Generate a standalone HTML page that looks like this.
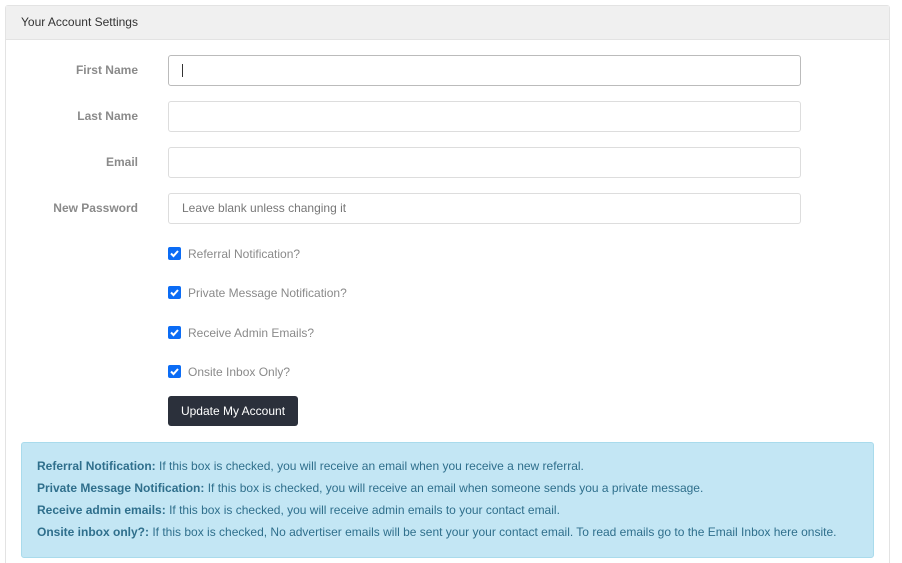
<!DOCTYPE html>
<html><head><style>
html,body{margin:0;background:#fff;font-family:"Liberation Sans",Arial,sans-serif;font-size:12px;width:902px;height:563px;overflow:hidden;position:relative;}
.card{position:absolute;left:5px;top:5px;width:883px;height:562px;border:1px solid #e3e3e3;border-bottom:none;border-radius:3px 3px 0 0;}
.hd{height:33px;background:#f0f0f0;border-bottom:1px solid #e3e3e3;line-height:33px;padding-left:15px;color:#333;font-size:12px;}
.lbl{position:absolute;width:132px;text-align:right;font-weight:bold;color:#8a8a8a;font-size:12px;}
.inp{position:absolute;left:162px;border:1px solid #ddd;border-radius:3px;box-sizing:border-box;width:633px;height:31px;color:#777;padding-left:13px;line-height:29px;}
.cb{position:absolute;left:162px;width:13px;height:13px;background:#0b6cf5;border-radius:2px;}
.cbl{position:absolute;left:182px;color:#8a8a8a;font-size:12px;}
.btn{position:absolute;left:162px;top:390px;width:130px;height:30px;background:#2b303b;border-radius:3px;color:#fff;text-align:center;line-height:30px;font-size:12px;}
.al{position:absolute;left:15px;top:436px;width:851px;height:114px;background:#c3e6f4;border:1px solid #a9dbec;border-radius:3px;color:#2f6f8c;font-size:12px;}
.al p{margin:0;position:absolute;left:15px;}
</style></head><body>
<div class="card">
<div class="hd">Your Account Settings</div>
<div class="lbl" style="top:57px">First Name</div>
<div class="inp" style="top:49px;border-color:#bbb"><span style="display:inline-block;width:1px;height:13px;background:#333;vertical-align:middle"></span></div>
<div class="lbl" style="top:103px">Last Name</div>
<div class="inp" style="top:95px"></div>
<div class="lbl" style="top:149px">Email</div>
<div class="inp" style="top:141px"></div>
<div class="lbl" style="top:195px">New Password</div>
<div class="inp" style="top:187px">Leave blank unless changing it</div>
<div class="cb" style="top:241px"><svg width="13" height="13"><path d="M3 6.5l2.5 2.5L10 4" stroke="#fff" stroke-width="2" fill="none"/></svg></div>
<div class="cbl" style="top:241px">Referral Notification?</div>
<div class="cb" style="top:280px"><svg width="13" height="13"><path d="M3 6.5l2.5 2.5L10 4" stroke="#fff" stroke-width="2" fill="none"/></svg></div>
<div class="cbl" style="top:280px">Private Message Notification?</div>
<div class="cb" style="top:320px"><svg width="13" height="13"><path d="M3 6.5l2.5 2.5L10 4" stroke="#fff" stroke-width="2" fill="none"/></svg></div>
<div class="cbl" style="top:320px">Receive Admin Emails?</div>
<div class="cb" style="top:359px"><svg width="13" height="13"><path d="M3 6.5l2.5 2.5L10 4" stroke="#fff" stroke-width="2" fill="none"/></svg></div>
<div class="cbl" style="top:359px">Onsite Inbox Only?</div>
<div class="btn">Update My Account</div>
<div class="al">
<p style="top:16px"><b>Referral Notification:</b> If this box is checked, you will receive an email when you receive a new referral.</p>
<p style="top:38px"><b>Private Message Notification:</b> If this box is checked, you will receive an email when someone sends you a private message.</p>
<p style="top:60px"><b>Receive admin emails:</b> If this box is checked, you will receive admin emails to your contact email.</p>
<p style="top:82px"><b>Onsite inbox only?:</b> If this box is checked, No advertiser emails will be sent your your contact email. To read emails go to the Email Inbox here onsite.</p>
</div>
</div>
</body></html>
